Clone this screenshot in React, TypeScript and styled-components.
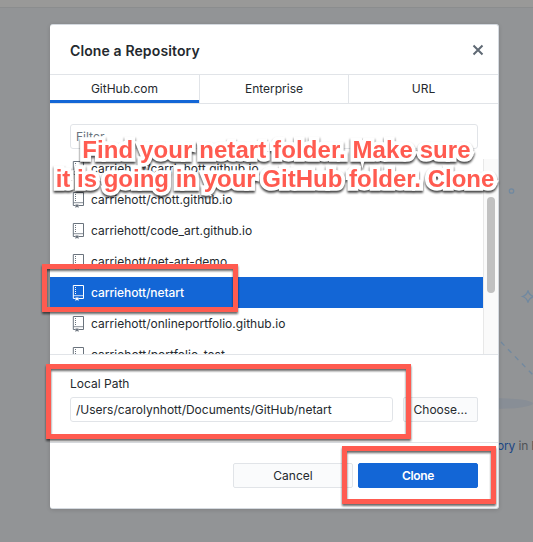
import React from 'react';
import styled, { createGlobalStyle } from 'styled-components';

const GlobalStyle = createGlobalStyle`
  * { box-sizing: border-box; }
  body { margin: 0; overflow: hidden; font-family: Inter, "Liberation Sans", sans-serif; color: #24292e; }
  button, input { font: inherit; color: inherit; margin: 0; }
`;

const Screen = styled.div`
  position: relative;
  width: 533px;
  height: 542px;
  overflow: hidden;
  background: #929496;
`;
const Toolbar = styled.div`
  height: 8px;
  background: #999998;
  border-bottom: 1px solid #8b8d8e;
`;
const Scenery = styled.svg`
  position: absolute;
  inset: 0;
`;
const BackdropText = styled.div`
  position: absolute;
  left: 497px;
  top: 437px;
  font-size: 12px;
  line-height: 17px;
  white-space: nowrap;
  letter-spacing: -0.15px;
  color: #505357;
`;
const BackdropLink = styled.span`
  color: #1c4684;
`;
const Dialog = styled.section`
  position: absolute;
  left: 50px;
  top: 24px;
  width: 449px;
  height: 485px;
  display: flex;
  flex-direction: column;
  background: #fff;
  border: 1px solid #d4d9df;
  border-left: 0;
  border-radius: 3px;
  box-shadow: 0 1px 4px rgba(0, 0, 0, 0.14);
  overflow: hidden;
`;
const Header = styled.header`
  height: 50px;
  flex: none;
  display: flex;
  align-items: center;
  justify-content: space-between;
  padding: 1px 14px 0 20px;
  border-bottom: 1px solid #e1e4e8;
`;
const Title = styled.h1`
  margin: 0;
  font-size: 14px;
  font-weight: 600;
  letter-spacing: 0.12px;
`;
const CloseIcon = styled.svg`
  width: 12px;
  height: 12px;
`;
const Tabs = styled.nav`
  height: 29px;
  flex: none;
  display: grid;
  grid-template-columns: 150px 149px 1fr;
  border-bottom: 1px solid #e1e4e8;
`;
const Tab = styled.button<{ $active?: boolean }>`
  border: 0;
  border-right: 1px solid #e1e4e8;
  background: none;
  padding: 0;
  font-size: 12px;
  line-height: 28px;
  box-shadow: ${p => (p.$active ? 'inset 0 -3px #1366d6' : 'none')};
  &:last-child { border-right: 0; }
`;
const FilterArea = styled.div`
  height: 55px;
  flex: none;
  padding: 20px 20px 0;
`;
const Field = styled.input`
  display: block;
  width: 100%;
  height: 25px;
  min-width: 0;
  padding: 0 5px;
  border: 1px solid #e1e4e8;
  border-radius: 3px;
  background: #fff;
  font-size: 12px;
  outline: none;
  &::placeholder { color: #6a737d; }
`;
const ListArea = styled.div`
  height: 196px;
  flex: none;
  display: flex;
  border-bottom: 1px solid #e1e4e8;
  overflow: hidden;
`;
const List = styled.ul`
  flex: 1;
  margin: -6px 0 0;
  padding: 0;
  list-style: none;
`;
const Row = styled.li<{ $selected?: boolean }>`
  height: 31px;
  display: flex;
  align-items: center;
  gap: 6px;
  padding-left: 22px;
  font-size: 12px;
  font-weight: ${p => (p.$selected ? 500 : 400)};
  color: ${p => (p.$selected ? '#fff' : '#24292e')};
  background: ${p => (p.$selected ? '#1366d6' : 'transparent')};
  svg { color: ${p => (p.$selected ? '#fff' : '#6a737d')}; }
`;
const RowName = styled.span<{ $track: number }>`
  letter-spacing: ${p => p.$track}px;
`;
const RepoSvg = styled.svg`
  width: 13px;
  height: 17px;
  flex: none;
`;
const ScrollTrack = styled.div`
  width: 15px;
  padding: 38px 3px 0 3px;
  border-left: 1px solid #e8e8e8;
  background: #fafafa;
`;
const ScrollThumb = styled.div`
  width: 8px;
  height: 96px;
  border-radius: 4px;
  background: #c1c1c1;
`;
const PathArea = styled.div`
  height: 88px;
  flex: none;
  padding: 20px 20px 0;
  border-bottom: 1px solid #e1e4e8;
`;
const Label = styled.label`
  display: block;
  height: 22px;
  font-size: 12px;
  line-height: 18px;
`;
const PathRow = styled.div`
  display: grid;
  grid-template-columns: 323px 75px;
  gap: 10px;
`;
const Button = styled.button<{ $primary?: boolean }>`
  height: 25px;
  padding: 0;
  border: 1px solid ${p => (p.$primary ? '#1366d6' : '#e1e4e8')};
  border-radius: 2px;
  background: ${p => (p.$primary ? '#1366d6' : '#fafbfc')};
  color: ${p => (p.$primary ? '#fff' : '#24292e')};
  font-size: 12px;
  font-weight: ${p => (p.$primary ? 600 : 400)};
  letter-spacing: ${p => (p.$primary ? '-0.3px' : 'normal')};
`;
const Footer = styled.footer`
  display: grid;
  grid-template-columns: 120px 120px;
  gap: 5px;
  justify-content: end;
  padding: 20px 20px 0;
`;
const Highlight = styled.div<{ $x: number; $y: number; $w: number; $h: number }>`
  position: absolute;
  left: ${p => p.$x}px;
  top: ${p => p.$y}px;
  width: ${p => p.$w}px;
  height: ${p => p.$h}px;
  border: 5px solid #ff5b50;
  filter: drop-shadow(0 2px 1px rgba(0, 0, 0, 0.6));
`;
const Caption = styled.p`
  position: absolute;
  left: 25px;
  top: 135px;
  width: 500px;
  margin: 0;
  text-align: center;
  white-space: pre;
  font: bold 24px/29px "Liberation Sans", sans-serif;
  color: #ff5b50;
  -webkit-text-stroke: 7.5px #fff;
  paint-order: stroke fill;
  stroke-linejoin: round;
  filter: drop-shadow(0 2px 1px rgba(0, 0, 0, 0.75));
`;
const CaptionLine = styled.span<{ $track: number; $indent?: number }>`
  display: block;
  padding-left: ${p => p.$indent ?? 0}px;
  letter-spacing: ${p => p.$track}px;
`;

const RepoIcon = () => (
  <RepoSvg viewBox="0 0 13 17" fill="none" stroke="currentColor">
    <path d="M3.5 14.5H1.3V1.5h10.2v13H6.5" />
    <path d="M1.3 11.7h10.2" strokeWidth="0.8" />
    <path d="M3.5 3v7" strokeDasharray="1 1" />
    <path d="M3.5 13.5h3V17L5 15.8 3.5 17z" fill="currentColor" stroke="none" />
  </RepoSvg>
);

const repositories = [
  { name: 'carriehott/carriehott.github.io', track: 0.03 },
  { name: 'carriehott/chott.github.io', track: 0.03 },
  { name: 'carriehott/code_art.github.io', track: 0 },
  { name: 'carriehott/net-art-demo', track: 0.04 },
  { name: 'carriehott/netart', track: -0.08, selected: true },
  { name: 'carriehott/onlineportfolio.github.io', track: 0.03 },
  { name: 'carriehott/portfolio_test', track: 0.04 },
];

export default function App() {
  return (
    <Screen>
      <GlobalStyle />
      <Toolbar />
      <Scenery width="533" height="542" fill="none" stroke="#7189a0">
        <circle cx="511.5" cy="191" r="2.2" strokeWidth="1.3" />
        <path d="M528 290.5Q529 295 533.5 296.5Q529 298 528 302.5Q527 298 522.5 296.5Q527 295 528 290.5Z" strokeWidth="1.3" />
        <path d="M501 342L533 375" strokeDasharray="5 5" strokeWidth="1.3" />
        <ellipse cx="492" cy="403.5" rx="41" ry="5.5" fill="#888e96" stroke="none" />
      </Scenery>
      <BackdropText><BackdropLink>ory</BackdropLink> in F</BackdropText>
      <Dialog>
        <Header>
          <Title>Clone a Repository</Title>
          <CloseIcon viewBox="0 0 12 12" stroke="#5f6974" strokeWidth="2">
            <path d="M1.5 1.5l9 9M10.5 1.5l-9 9" />
          </CloseIcon>
        </Header>
        <Tabs>
          <Tab $active>GitHub.com</Tab>
          <Tab>Enterprise</Tab>
          <Tab>URL</Tab>
        </Tabs>
        <FilterArea><Field placeholder="Filter" /></FilterArea>
        <ListArea>
          <List>
            {repositories.map(repo => (
              <Row key={repo.name} $selected={repo.selected}>
                <RepoIcon />
                <RowName $track={repo.track}>{repo.name}</RowName>
              </Row>
            ))}
          </List>
          <ScrollTrack><ScrollThumb /></ScrollTrack>
        </ListArea>
        <PathArea>
          <Label>Local Path</Label>
          <PathRow>
            <Field defaultValue="/Users/carolynhott/Documents/GitHub/netart" />
            <Button>Choose...</Button>
          </PathRow>
        </PathArea>
        <Footer>
          <Button>Cancel</Button>
          <Button $primary>Clone</Button>
        </Footer>
      </Dialog>
      <Highlight $x={42} $y={264} $w={196} $h={48} />
      <Highlight $x={46} $y={364} $w={365} $h={75} />
      <Highlight $x={342} $y={446} $w={154} $h={58} />
      <Caption>
        <CaptionLine $track={0.09} $indent={3}>Find your netart folder. Make sure</CaptionLine>
        <CaptionLine $track={0}>it is going in your GitHub folder. Clone</CaptionLine>
      </Caption>
    </Screen>
  );
}
